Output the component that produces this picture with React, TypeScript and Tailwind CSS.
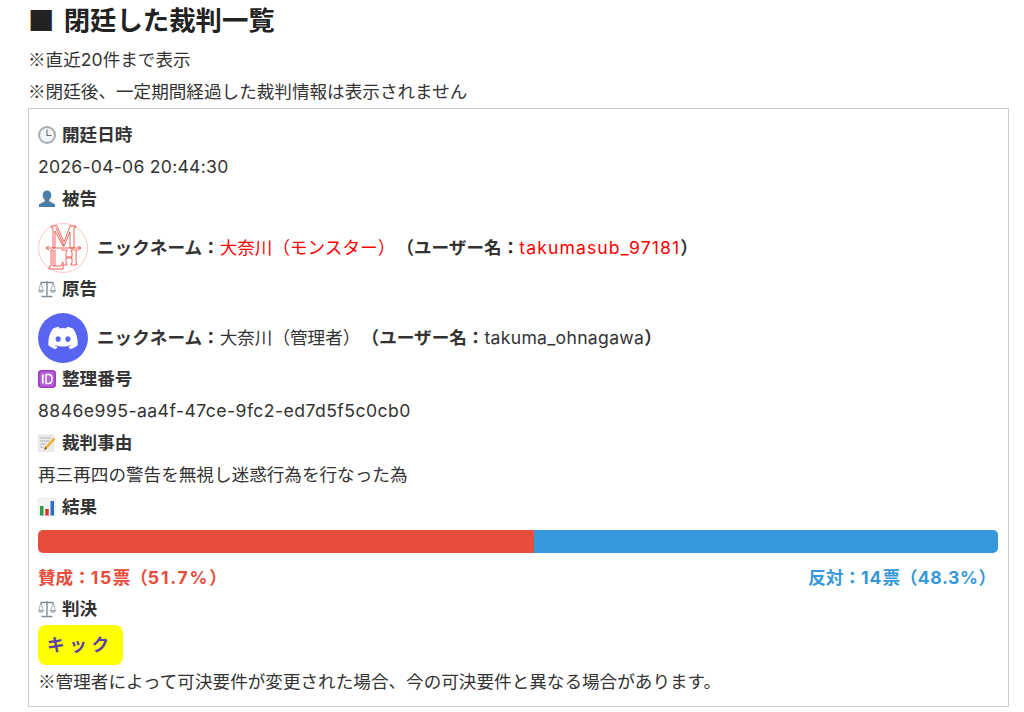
import { FaDiscord } from 'react-icons/fa6';

const FONT = "font-['Inter','Noto_Sans_CJK_JP',sans-serif]";

function Note() {
  return <span className="font-['Noto_Sans_CJK_JP',sans-serif]">※</span>;
}

function ClockIcon() {
  return (
    <svg width="18" height="18" viewBox="0 0 18 18" className="shrink-0">
      <circle cx="9" cy="9" r="9" fill="#a9aeb4" />
      <circle cx="9" cy="9" r="7" fill="#f1f2f4" />
      <path d="M9 3.500V9.500H13.500" stroke="#6a6e74" strokeWidth="1.100" fill="none" />
    </svg>
  );
}

function BustIcon() {
  return (
    <svg width="18" height="18" viewBox="0 0 18 18" className="shrink-0">
      <path d="M9 0.500c2.600 0 4.300 2 4.300 4.700 0 2-.9 3.700-2.100 4.600v1.400l5.800 3V17H1v-2.800l5.800-3V9.800C5.600 8.900 4.700 7.200 4.700 5.200 4.700 2.500 6.400.5 9 .5z" fill="#4a7ea6" />
    </svg>
  );
}

function ScalesIcon() {
  return (
    <svg width="18" height="18" viewBox="0 0 18 18" className="shrink-0" fill="none" stroke="#7f8c98" strokeWidth="1">
      <path d="M9 1v14.500M2.500 2.500h13M3.500 16.500h11" strokeWidth="1.400" />
      <path d="M3 2.500L.8 10.500h4.400zM15 2.500L12.800 10.500h4.400z" strokeWidth="0.700" />
      <path d="M.3 10.500c.5 2.500 5 2.500 5.400 0zM12.300 10.500c.5 2.500 5 2.500 5.400 0z" fill="#bcc4cc" strokeWidth="0.500" />
    </svg>
  );
}

function IdIcon() {
  return (
    <svg width="18" height="18" viewBox="0 0 18 18" className="shrink-0">
      <rect x="0" y="0" width="18" height="18" rx="3.500" fill="#9b3cc0" />
      <rect x="1.500" y="1.500" width="15" height="15" rx="2.500" fill="#b45fd6" />
      <path d="M4.800 4.500v9" stroke="#fff" strokeWidth="1.800" />
      <path d="M8 4.500h2.500c2.500 0 3.500 2 3.500 4.500s-1 4.500-3.500 4.500H8z" stroke="#fff" strokeWidth="1.500" fill="none" />
    </svg>
  );
}

function MemoIcon() {
  return (
    <svg width="18" height="18" viewBox="0 0 18 18" className="shrink-0">
      <rect x="0.500" y="1" width="15" height="16.500" fill="#ececec" stroke="#d5d5d5" strokeWidth="0.500" />
      <path d="M2 4h11M2 7h9M2 10h6M2 13h4" stroke="#a5a5a5" strokeWidth="0.800" />
      <path d="M15.500 3.500l2 2L9 14.500l-3 1.500L7.500 12.500z" fill="#f2b135" />
      <path d="M7.500 12.500L6 16l3-1.500z" fill="#6b5a48" />
    </svg>
  );
}

function ChartIcon() {
  return (
    <svg width="18" height="18" viewBox="0 0 18 18" className="shrink-0">
      <rect x="0.500" y="0.500" width="17" height="17" fill="#f2f4f6" stroke="#d8dce0" strokeWidth="0.500" />
      <rect x="2" y="8" width="3.500" height="9.500" fill="#2f9e44" />
      <rect x="7.250" y="11" width="3.500" height="6.500" fill="#d9302c" />
      <rect x="12.500" y="3" width="3.500" height="14.500" fill="#2a6fc4" />
    </svg>
  );
}

function MlhLogo() {
  return (
    <svg width="50" height="50" viewBox="0 0 50 50" className="shrink-0">
      <circle cx="25" cy="25" r="24.500" fill="#fff" stroke="#f3b0ac" strokeWidth="0.700" />
      <g fill="none" stroke="#ee3a30" strokeWidth="0.800">
        {/* M */}
        <path d="M13 3h6l7 16 6-16h6v1l-2 1v20h-4V9l-6 14h-1L17 8v17h-2V5l-2-1z" />
        <path d="M18 5l8 18" />
        <path d="M8 25h35M11 23l-3 2 3 2M40 23l3 2-3 2" />
        {/* L */}
        <path d="M13 27h2v16h8l2-4v7H11v-2l2-1z" />
        <path d="M17 27v16" />
        {/* H */}
        <path d="M23 27h6v1l-1 1v5h6v-5l-1-1v-1h6v1l-1 1v11l1 1v1h-6v-1l1-1v-5h-6v5l1 1v1h-4" />
      </g>
    </svg>
  );
}

function SectionLabel({ icon, text }: { icon: React.ReactNode; text: string }) {
  return (
    <div className="flex h-8 items-center gap-[6px] font-bold">
      {icon}
      <span>{text}</span>
    </div>
  );
}

function Party({ avatar, children }: { avatar: React.ReactNode; children: React.ReactNode }) {
  return (
    <div className="mt-2 flex h-[50px] items-center gap-[9px]">
      {avatar}
      <div className="font-bold">{children}</div>
    </div>
  );
}

export default function App() {
  return (
    <div className={`${FONT} h-[712px] overflow-hidden bg-white pl-7 pr-[15px] text-[17.6px] leading-8 text-[#333]`}>
      <h2 className="pt-[2px] text-[26.4px] font-bold leading-[34px] text-[#222]">
        <span className="mr-[3px] font-['Noto_Sans_CJK_JP',sans-serif]">■</span> 閉廷した裁判一覧
      </h2>
      <p className="mt-[6px] leading-[31px]"><Note />直近20件まで表示</p>
      <p className="leading-[31px]"><Note />閉廷後、一定期間経過した裁判情報は表示されません</p>
      <div className="mt-[1px] h-[599px] border border-[#ccc] pl-[9px] pr-[10px] pt-[10px]">
        <SectionLabel icon={<ClockIcon />} text="開廷日時" />
        <p className="tracking-[0.25px]">2026-04-06 20:44:30</p>
        <SectionLabel icon={<BustIcon />} text="被告" />
        <Party avatar={<MlhLogo />}>
          ニックネーム：<span className="font-normal text-[#f00]">大奈川（モンスター）</span>
          <span className="ml-[10px]">（ユーザー名：</span>
          <span className="font-normal tracking-[1.1px] text-[#f00]">takumasub_97181</span>）
        </Party>
        <SectionLabel icon={<ScalesIcon />} text="原告" />
        <Party
          avatar={
            <div className="flex h-[50px] w-[50px] shrink-0 items-center justify-center rounded-full bg-[#5865f2] text-white">
              <FaDiscord size={32} />
            </div>
          }
        >
          ニックネーム：<span className="font-normal">大奈川（管理者）</span>
          <span className="ml-[10px]">（ユーザー名：</span>
          <span className="font-normal tracking-[0.3px]">takuma_ohnagawa</span>）
        </Party>
        <SectionLabel icon={<IdIcon />} text="整理番号" />
        <p className="tracking-[0.45px]">8846e995-aa4f-47ce-9fc2-ed7d5f5c0cb0</p>
        <SectionLabel icon={<MemoIcon />} text="裁判事由" />
        <p>再三再四の警告を無視し迷惑行為を行なった為</p>
        <SectionLabel icon={<ChartIcon />} text="結果" />
        <div className="mt-[7px] flex h-[23px] overflow-hidden rounded-[5px]">
          <div className="w-[51.7%] bg-[#e74c3c]" />
          <div className="flex-1 bg-[#3498db]" />
        </div>
        <div className="mt-[9px] flex justify-between pr-[2px] font-bold leading-[31px]">
          <span className="text-[#e74c3c]">賛成：<span className="tracking-[1.5px]">15</span>票（<span className="tracking-[1.8px]">51.7%</span>）</span>
          <span className="text-[#3498db]">反対：<span className="tracking-[1px]">14</span>票（<span className="tracking-[0.6px]">48.3%</span>）</span>
        </div>
        <SectionLabel icon={<ScalesIcon />} text="判決" />
        <span className="inline-block h-10 rounded-[8px] bg-[#ff0] px-[9px] font-bold leading-10 tracking-[4.700px] text-[#5b3fa8]">キック</span>
        <p><Note />管理者によって可決要件が変更された場合、今の可決要件と異なる場合があります。</p>
      </div>
    </div>
  );
}
